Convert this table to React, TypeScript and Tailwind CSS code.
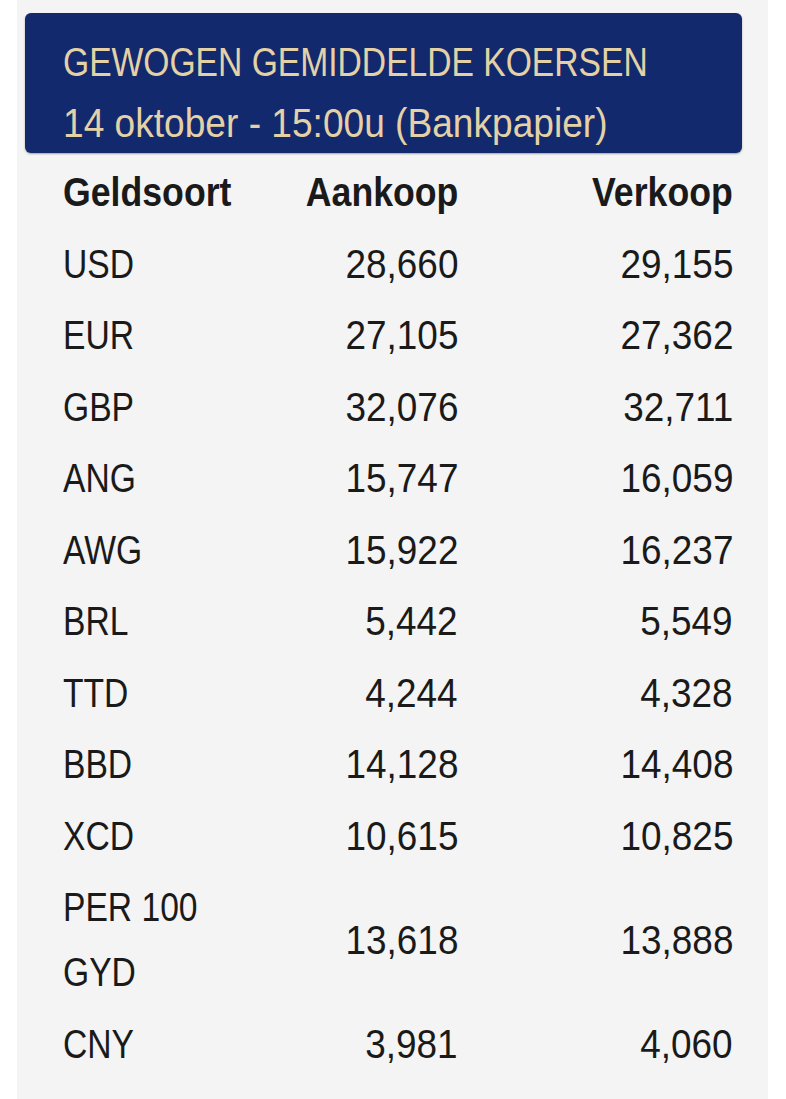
import React from 'react';

const rows: [string, string, string][] = [
	['USD', '28,660', '29,155'],
	['EUR', '27,105', '27,362'],
	['GBP', '32,076', '32,711'],
	['ANG', '15,747', '16,059'],
	['AWG', '15,922', '16,237'],
	['BRL', '5,442', '5,549'],
	['TTD', '4,244', '4,328'],
	['BBD', '14,128', '14,408'],
	['XCD', '10,615', '10,825'],
	['PER 100 GYD', '13,618', '13,888'],
	['CNY', '3,981', '4,060'],
];

// no narrow face installed, so squeeze Liberation Sans horizontally
const Narrow: React.FC<{right?: boolean; className?: string; children: React.ReactNode}> = ({right, className, children}) => (
	<span className={`inline-block ${right ? 'origin-right' : 'origin-left'} ${className ?? 'scale-x-[0.82]'}`}>
		{children}
	</span>
);

export default function App() {
	return (
		<div className="min-h-screen bg-white">
			<div className="ml-[17px] w-[751px] min-h-[1099px] bg-[#f4f4f4] pt-[13px] text-[41px] text-[#1a1a1a] font-['Liberation_Sans',Arial,sans-serif]">
				<div className="ml-[8px] w-[717px] h-[140px] rounded-[6px] bg-[#13296e] pt-[19px] pl-[38px] leading-[61px] text-[#e4d2a6] shadow-[0_1px_2px_rgba(0,0,0,0.35)]">
					<div className="whitespace-nowrap"><Narrow>GEWOGEN GEMIDDELDE KOERSEN</Narrow></div>
					<div className="whitespace-nowrap"><Narrow className="scale-x-[0.905]">14 oktober - 15:00u (Bankpapier)</Narrow></div>
				</div>
				<div className="grid grid-cols-[187px_208px_275px] pl-[46px] pt-[4px] leading-[65px]">
					<div className="py-[3.25px] font-bold"><Narrow className="scale-x-[0.87]">Geldsoort</Narrow></div>
					<div className="py-[3.25px] font-bold text-right"><Narrow right className="scale-x-[0.87]">Aankoop</Narrow></div>
					<div className="py-[3.25px] font-bold text-right"><Narrow right className="scale-x-[0.87]">Verkoop</Narrow></div>
					{rows.map(([code, buy, sell]) => (
						<React.Fragment key={code}>
							<div className="py-[3.25px]">
								<Narrow className="w-[172px] scale-x-[0.82]">{code}</Narrow>
							</div>
							<div className="py-[3.25px] text-right self-center"><Narrow right className="scale-x-[0.9]">{buy}</Narrow></div>
							<div className="py-[3.25px] text-right self-center"><Narrow right className="scale-x-[0.9]">{sell}</Narrow></div>
						</React.Fragment>
					))}
				</div>
			</div>
		</div>
	);
}
